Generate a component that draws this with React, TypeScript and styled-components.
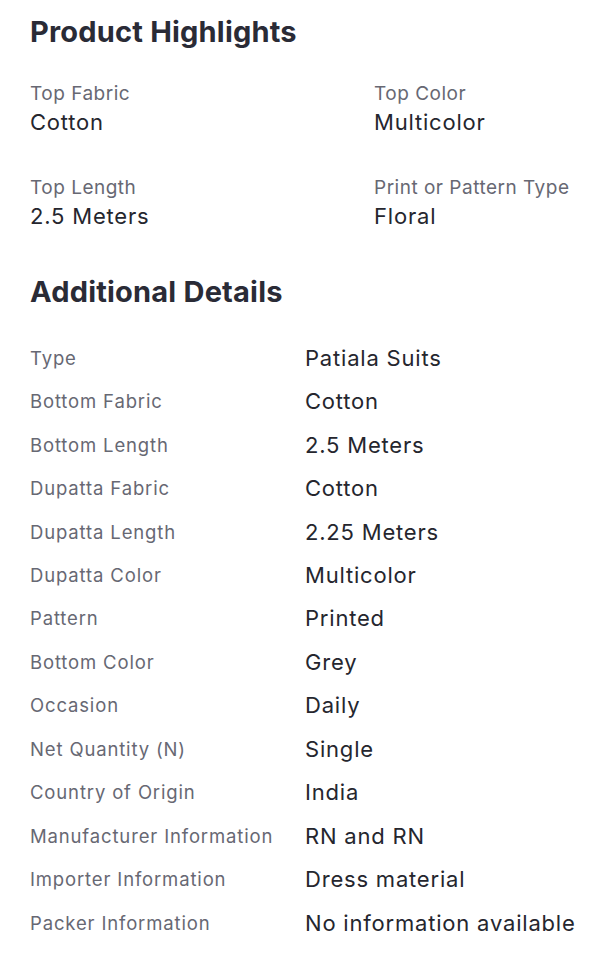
import React from "react";
import styled, { createGlobalStyle } from "styled-components";

const Global = createGlobalStyle`
  html, body { margin: 0; padding: 0; background: #ffffff; }
  body { font-family: "Inter", "Lato", sans-serif; -webkit-font-smoothing: antialiased; }
`;

const Page = styled.div`
  width: 600px;
  padding: 14px 30px 0 30px;
  box-sizing: border-box;
`;

const Heading = styled.h2<{ $mt?: number }>`
  margin: ${(p) => p.$mt ?? 0}px 0 0 0;
  font-size: 29px;
  line-height: 36px;
  font-weight: 700;
  color: #2a2b36;
  letter-spacing: 0.2px;
`;

const HighlightGrid = styled.div`
  display: grid;
  grid-template-columns: 344px 1fr;
  row-gap: 38px;
  margin-top: 31px;
`;

const Highlight = styled.div`
  display: flex;
  flex-direction: column;
  gap: 0px;
`;

const HLabel = styled.span`
  font-size: 19px;
  line-height: 26px;
  color: #676873;
  letter-spacing: 0.5px;
`;

const HValue = styled.span`
  font-size: 22px;
  line-height: 30px;
  color: #25262e;
  letter-spacing: 0.8px;
`;

const Table = styled.div`
  display: flex;
  flex-direction: column;
  margin-top: 26px;
`;

const Row = styled.div`
  display: grid;
  grid-template-columns: 275px 1fr;
  align-items: center;
  height: 43.46px;
`;

const Label = styled.span`
  font-size: 18.5px;
  color: #676873;
  letter-spacing: 0.85px;
  white-space: nowrap;
`;

const Value = styled.span`
  font-size: 22px;
  color: #25262e;
  letter-spacing: 0.8px;
  white-space: nowrap;
`;

const highlights = [
  ["Top Fabric", "Cotton"],
  ["Top Color", "Multicolor"],
  ["Top Length", "2.5 Meters"],
  ["Print or Pattern Type", "Floral"],
];

const details = [
  ["Type", "Patiala Suits"],
  ["Bottom Fabric", "Cotton"],
  ["Bottom Length", "2.5 Meters"],
  ["Dupatta Fabric", "Cotton"],
  ["Dupatta Length", "2.25 Meters"],
  ["Dupatta Color", "Multicolor"],
  ["Pattern", "Printed"],
  ["Bottom Color", "Grey"],
  ["Occasion", "Daily"],
  ["Net Quantity (N)", "Single"],
  ["Country of Origin", "India"],
  ["Manufacturer Information", "RN and RN"],
  ["Importer Information", "Dress material"],
  ["Packer Information", "No information available"],
];

export default function App() {
  return (
    <>
      <Global />
      <Page>
        <Heading>Product Highlights</Heading>
        <HighlightGrid>
          {highlights.map(([l, v]) => (
            <Highlight key={l}>
              <HLabel>{l}</HLabel>
              <HValue>{v}</HValue>
            </Highlight>
          ))}
        </HighlightGrid>
        <Heading $mt={43}>Additional Details</Heading>
        <Table>
          {details.map(([l, v]) => (
            <Row key={l}>
              <Label>{l}</Label>
              <Value>{v}</Value>
            </Row>
          ))}
        </Table>
      </Page>
    </>
  );
}
